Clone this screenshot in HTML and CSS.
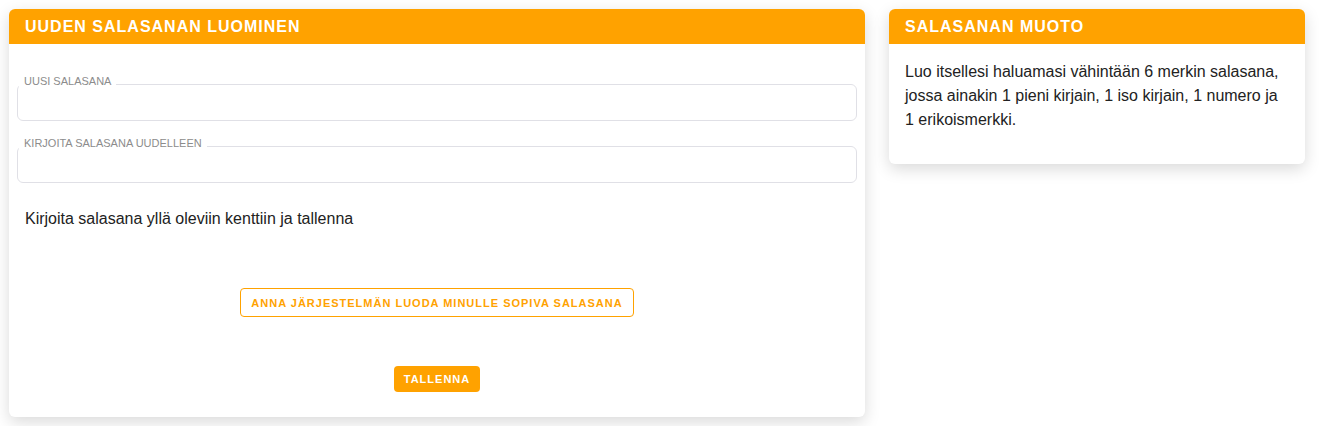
FILE: index.html
```html
<!DOCTYPE html>
<html lang="fi">
<head>
<meta charset="utf-8">
<title>Uuden salasanan luominen</title>
<link rel="stylesheet" href="styles.css">
</head>
<body>
<div class="page">
  <section class="card card-main">
    <header class="card-head">UUDEN SALASANAN LUOMINEN</header>
    <div class="card-body main-body">
      <fieldset class="field">
        <legend class="field-label">UUSI SALASANA</legend>
        <input class="field-input" type="password">
      </fieldset>
      <fieldset class="field field-second">
        <legend class="field-label">KIRJOITA SALASANA UUDELLEEN</legend>
        <input class="field-input" type="password">
      </fieldset>
      <p class="hint">Kirjoita salasana yllä oleviin kenttiin ja tallenna</p>
      <div class="actions">
        <button class="btn btn-outline" type="button">ANNA JÄRJESTELMÄN LUODA MINULLE SOPIVA SALASANA</button>
        <button class="btn btn-fill" type="button">TALLENNA</button>
      </div>
    </div>
  </section>
  <section class="card card-side">
    <header class="card-head">SALASANAN MUOTO</header>
    <div class="card-body side-body">
      <p class="side-text">Luo itsellesi haluamasi vähintään 6 merkin salasana, jossa ainakin 1 pieni kirjain, 1 iso kirjain, 1 numero ja 1 erikoismerkki.</p>
    </div>
  </section>
</div>
</body>
</html>
```
FILE: styles.css
```css
* { box-sizing: border-box; }
html, body { margin: 0; padding: 0; background: #fff; }
body { font-family: "Liberation Sans", Arial, sans-serif; color: #222; }

.page {
  display: flex;
  align-items: flex-start;
  gap: 24px;
  padding: 9px 14px 9px 9px;
}

.card {
  background: #fff;
  border-radius: 6px;
  overflow: hidden;
  box-shadow: 0 5px 16px rgba(0, 0, 0, 0.15);
}
.card-main { flex: 1; }
.card-side { width: 416px; }

.card-head {
  background: #ffa200;
  color: #fff;
  height: 35px;
  padding: 0 16px;
  display: flex;
  align-items: center;
  font-weight: bold;
  font-size: 16px;
  letter-spacing: 1px;
}

.main-body { padding: 31px 8px 25px; }

.field {
  margin: 0;
  padding: 0 0 0 1px;
  border: 1px solid #e0e0e6;
  border-radius: 6px;
  min-width: 0;
}
.field-second { margin-top: 16px; }
.field-label {
  padding: 0 5px 6px;
  font-size: 11px;
  font-weight: normal;
  color: #8c8c8c;
  line-height: 12px;
}
.field-input {
  display: block;
  width: 100%;
  height: 27px;
  border: 0;
  outline: none;
  background: transparent;
  font: inherit;
}

.hint {
  margin: 27px 0 0 8px;
  font-size: 16px;
  line-height: 18px;
}

.actions {
  display: flex;
  flex-direction: column;
  align-items: center;
  margin-top: 60px;
}

.btn {
  font-family: "Liberation Sans", Arial, sans-serif;
  font-weight: bold;
  font-size: 11px;
  letter-spacing: 1px;
  border-radius: 4px;
  cursor: pointer;
}
.btn-outline {
  height: 29px;
  padding: 0 10px;
  background: #fff;
  color: #ffa200;
  border: 1px solid #ffa200;
}
.btn-fill {
  margin-top: 49px;
  height: 26px;
  padding: 0 10px;
  background: #ffa200;
  color: #fff;
  border: 0;
}

.side-body { padding: 16px 16px 32px; }
.side-text {
  margin: 0;
  font-size: 16px;
  line-height: 24px;
}
```
